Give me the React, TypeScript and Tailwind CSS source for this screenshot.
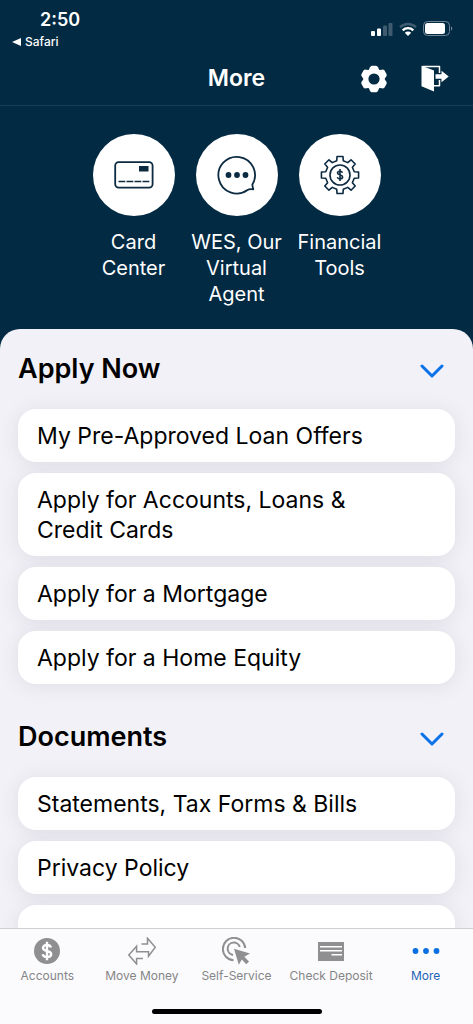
import React from "react";

type IconProps = { className?: string };

const GEAR_TURNS = [0, 60, 120, 180, 240, 300];

function SignalIcon() {
  return (
    <svg width="22" height="14" viewBox="0 0 22 14" aria-hidden="true">
      <rect x="0" y="9" width="4" height="5" rx="1" fill="#fff" />
      <rect x="6" y="6.500" width="4" height="7.500" rx="1" fill="#fff" />
      <rect x="12" y="3.500" width="4" height="10.500" rx="1" fill="#3f5b70" />
      <rect x="17.500" y="1" width="4" height="13" rx="1" fill="#3f5b70" />
    </svg>
  );
}

function WifiIcon() {
  return (
    <svg width="18" height="14" viewBox="0 0 18 14" fill="none" aria-hidden="true">
      <path d="M1 5.200a11.500 11.500 0 0 1 16 0" stroke="#3f5b70" strokeWidth="2.400" />
      <path d="M3.700 8.300a7.600 7.600 0 0 1 10.600 0" stroke="#fff" strokeWidth="2.400" />
      <path d="M9 14l-3.200-3.300a4.600 4.600 0 0 1 6.400 0z" fill="#fff" />
    </svg>
  );
}

function BatteryIcon() {
  return (
    <svg width="30" height="15" viewBox="0 0 30 15" fill="none" aria-hidden="true">
      <rect x="0.500" y="0.500" width="26" height="14" rx="4" stroke="#6f8494" />
      <rect x="2" y="2" width="20" height="11" rx="2.500" fill="#fff" />
      <path d="M28 5.500c1.700.4 1.700 3.600 0 4z" fill="#6f8494" />
    </svg>
  );
}

function GearIcon() {
  return (
    <svg width="28" height="28" viewBox="-14 -14 28 28" aria-hidden="true">
      <circle r="8" fill="none" stroke="#fff" strokeWidth="4.800" />
      {GEAR_TURNS.map((turn) => (
        <path
          key={turn}
          d="M-5.500-8.500L-4-11.800Q-3.300-13.300-2-13.300H2Q3.300-13.300 4-11.800L5.500-8.500z"
          transform={`rotate(${turn})`}
          fill="#fff"
        />
      ))}
    </svg>
  );
}

function ExitIcon() {
  return (
    <svg width="28" height="27" viewBox="0 0 28 27" fill="none" aria-hidden="true">
      <path d="M1.500 1.500H18.500V8M18.500 15V20.800H13" stroke="#fff" strokeWidth="1.500" strokeLinejoin="round" />
      <path d="M.5.700L13 5.600V26.500L.5 21.200z" fill="#fff" />
      <path d="M14.500 9.300H20.500V5.800L27.700 11.500L20.500 17.200V13.700H14.500z" fill="#fff" />
    </svg>
  );
}

function CardIcon() {
  return (
    <svg width="40" height="28" viewBox="0 0 40 28" fill="none" aria-hidden="true">
      <rect x="1.200" y="1.200" width="37.400" height="25.400" rx="3.500" stroke="#0c2a40" strokeWidth="1.800" />
      <rect x="25" y="5" width="9.500" height="5.500" fill="#0c2a40" />
      <path d="M4.500 20.500H35.500" stroke="#0c2a40" strokeWidth="1.500" strokeDasharray="6.800 1.200" />
    </svg>
  );
}

function ChatIcon() {
  return (
    <svg width="40" height="40" viewBox="0 0 40 40" fill="none" aria-hidden="true">
      <path
        d="M35.300 29.700A18.300 18.300 0 1 0 30.500 34.900C32 34 33.200 34 36.300 34.300Q35.600 32 35.300 29.700z"
        stroke="#0c2a40"
        strokeWidth="1.800"
        strokeLinejoin="round"
      />
      <circle cx="11.500" cy="20" r="2.900" fill="#0c2a40" />
      <circle cx="20" cy="20" r="2.900" fill="#0c2a40" />
      <circle cx="28.500" cy="20" r="2.900" fill="#0c2a40" />
    </svg>
  );
}

const toothPoint = (radius: number, degrees: number) => {
  const angle = (degrees * Math.PI) / 180;
  return `${(radius * Math.cos(angle)).toFixed(2)} ${(radius * Math.sin(angle)).toFixed(2)}`;
};

const TOOTHED_RING =
  "M" +
  Array.from({ length: 8 }, (_, i) => i * 45)
    .map((a) =>
      [
        toothPoint(14.600, a - 13),
        toothPoint(18.800, a - 9),
        toothPoint(18.800, a + 9),
        toothPoint(14.600, a + 13),
      ].join("L")
    )
    .join("L") +
  "z";

function DollarGearIcon() {
  return (
    <svg
      width="40"
      height="40"
      viewBox="-20 -20 40 40"
      fill="none"
      stroke="#0c2a40"
      strokeWidth="1.600"
      strokeLinejoin="round"
      aria-hidden="true"
    >
      <path d={TOOTHED_RING} />
      <circle r="10" />
      <path d="M2.500-2.300C2-3.600.9-3.800 0-3.800C-1.500-3.800-2.500-3-2.500-1.900C-2.500.600 2.600-.5 2.600 2C2.600 3.200 1.500 3.900 0 3.900C-1.400 3.900-2.400 3.300-2.700 2.100M0-6V6" />
    </svg>
  );
}

function ChevronIcon() {
  return (
    <svg width="24" height="16" viewBox="0 0 24 16" fill="none" aria-hidden="true">
      <path
        d="M2 4L12 14L22 4"
        stroke="#0a72e8"
        strokeWidth="3"
        strokeLinecap="round"
        strokeLinejoin="round"
      />
    </svg>
  );
}

function AccountsIcon({ className }: IconProps) {
  return (
    <svg width="28" height="28" viewBox="-14 -14 28 28" fill="none" className={className} aria-hidden="true">
      <circle r="13" fill="#8f8f91" />
      <path
        d="M4-3.500C3.400-5.400 1.800-6 0-6C-2.300-6-4-4.900-4-3C-4 .8 4.200-.8 4.200 3.100C4.200 5 2.400 6.100 0 6.100C-2.200 6.100-3.900 5.300-4.400 3.300M0-9.200V9.200"
        stroke="#fff"
        strokeWidth="2.400"
      />
    </svg>
  );
}

function MoveMoneyIcon({ className }: IconProps) {
  return (
    <svg
      width="28"
      height="28"
      viewBox="0 0 28 28"
      fill="none"
      stroke="#8f8f91"
      strokeWidth="1.500"
      className={className}
      aria-hidden="true"
    >
      <path d="M13.500 6.900H19.500V1.200L27.300 10.300L20.500 19.200V14.800H8.600V9.300L.8 18L8.600 27V21.500H15" />
    </svg>
  );
}

function SelfServiceIcon({ className }: IconProps) {
  return (
    <svg width="28" height="28" viewBox="0 0 28 28" fill="none" className={className} aria-hidden="true">
      <path d="M11.500 23.200A11.200 11.200 0 1 1 23.200 11" stroke="#8f8f91" strokeWidth="2" />
      <path d="M11 17.900A6.200 6.200 0 1 1 17.800 10" stroke="#8f8f91" strokeWidth="2" />
      <path d="M12 11.800L28 16.500L22.300 19.800L27 24.500L24.300 27.200L19.800 22.500L16.800 27.800z" fill="#8f8f91" />
    </svg>
  );
}

function CheckIcon({ className }: IconProps) {
  return (
    <svg width="28" height="28" viewBox="0 0 28 28" fill="none" className={className} aria-hidden="true">
      <rect x="1" y="5" width="26" height="19" fill="#8f8f91" />
      <path d="M3 9.800H25M3 13.800H25M14.500 17.800H25" stroke="#fff" strokeWidth="1.500" />
    </svg>
  );
}

function MoreIcon({ className }: IconProps) {
  return (
    <svg width="28" height="28" viewBox="0 0 28 28" fill="#0a6fe0" className={className} aria-hidden="true">
      <circle cx="3.500" cy="14" r="2.900" />
      <circle cx="14" cy="14" r="2.900" />
      <circle cx="24.500" cy="14" r="2.900" />
    </svg>
  );
}

const shortcuts = [
  { label: "Card Center", Icon: CardIcon },
  { label: "WES, Our Virtual Agent", Icon: ChatIcon },
  { label: "Financial Tools", Icon: DollarGearIcon },
];

const sections = [
  {
    title: "Apply Now",
    items: [
      "My Pre-Approved Loan Offers",
      "Apply for Accounts, Loans & Credit Cards",
      "Apply for a Mortgage",
      "Apply for a Home Equity",
    ],
  },
  {
    title: "Documents",
    items: ["Statements, Tax Forms & Bills", "Privacy Policy", ""],
  },
];

const tabs = [
  { label: "Accounts", Icon: AccountsIcon },
  { label: "Move Money", Icon: MoveMoneyIcon },
  { label: "Self-Service", Icon: SelfServiceIcon },
  { label: "Check Deposit", Icon: CheckIcon },
  { label: "More", Icon: MoreIcon, active: true },
];

export default function App() {
  return (
    <div className="flex h-screen flex-col bg-[#022a42] font-['Inter','Liberation_Sans',sans-serif] text-white">
      <header className="shrink-0 border-b border-[#183d54]">
        <div className="flex items-start justify-between pr-5 pl-3">
          <div className="pt-2">
            <div className="pl-7 text-lg leading-6 font-semibold">2:50</div>
            <a href="#safari" className="flex items-center gap-1 text-xs leading-5 font-medium">
              <svg width="9" height="8" viewBox="0 0 9 8" fill="#fff" aria-hidden="true">
                <path d="M0 4L9 0V8z" />
              </svg>
              Safari
            </a>
          </div>
          <div className="flex items-center gap-[6px] pt-[21px]">
            <SignalIcon />
            <WifiIcon />
            <BatteryIcon />
          </div>
        </div>
        <div className="grid h-[53px] grid-cols-[1fr_auto_1fr] items-center px-6">
          <h1 className="col-start-2 text-[23px] font-semibold">More</h1>
          <div className="flex items-center justify-end gap-[33px]">
            <button type="button" aria-label="Settings">
              <GearIcon />
            </button>
            <button type="button" aria-label="Sign out">
              <ExitIcon />
            </button>
          </div>
        </div>
      </header>

      <main className="flex min-h-0 flex-1 flex-col overflow-y-auto [scrollbar-width:none]">
        <div className="flex justify-center pt-7 pb-[22px]">
          {shortcuts.map(({ label, Icon }) => (
            <button
              key={label}
              type="button"
              className="flex w-[103px] flex-col items-center gap-[13px] text-xl leading-[26px]"
            >
              <span className="flex size-[82px] items-center justify-center rounded-full bg-white">
                <Icon />
              </span>
              <span>{label}</span>
            </button>
          ))}
        </div>

        <div className="flex shrink-0 grow flex-col gap-[13px] rounded-t-[20px] bg-[#f2f1f7] px-[18px] pb-6 text-black">
          {sections.map(({ title, items }) => (
            <section key={title}>
              <h2>
                <button
                  type="button"
                  aria-expanded="true"
                  className="flex h-20 w-full items-center justify-between pt-px pr-[11px] text-[27px] font-semibold"
                >
                  {title}
                  <ChevronIcon />
                </button>
              </h2>
              <ul className="flex flex-col gap-[11px]">
                {items.map((item) => (
                  <li key={item}>
                    <a
                      href="#item"
                      className="block min-h-[53px] rounded-[18px] bg-white pt-3 pr-16 pb-[11px] pl-[19px] text-[23px] leading-[30px] shadow-[0_2px_20px_rgba(60,60,90,0.1)]"
                    >
                      {item}
                    </a>
                  </li>
                ))}
              </ul>
            </section>
          ))}
        </div>
      </main>

      <footer className="shrink-0 border-t border-[#cfcfd2] bg-[#fbfbfd]">
        <nav className="grid grid-cols-5 pt-2">
          {tabs.map(({ label, Icon, active }) => (
            <a
              key={label}
              href="#tab"
              aria-current={active ? "page" : undefined}
              className={
                active
                  ? "flex flex-col items-center gap-[3px] text-xs leading-4 whitespace-nowrap text-[#1f63b5]"
                  : "flex flex-col items-center gap-[3px] text-xs leading-4 whitespace-nowrap text-[#858587]"
              }
            >
              <Icon />
              {label}
            </a>
          ))}
        </nav>
        <div className="flex justify-center pt-[25px] pb-[10px]">
          <div className="h-[5px] w-[170px] rounded-full bg-black" />
        </div>
      </footer>
    </div>
  );
}
